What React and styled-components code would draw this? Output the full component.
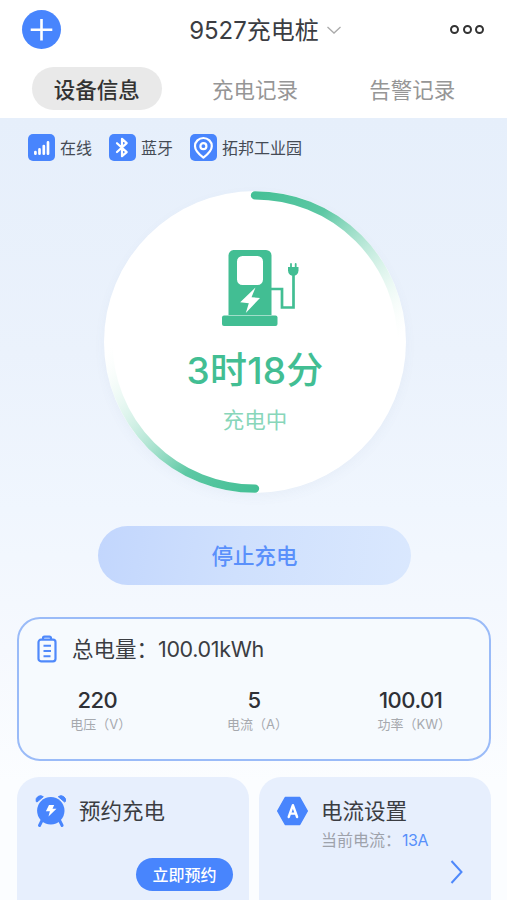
import React from 'react';
import styled, { createGlobalStyle } from 'styled-components';

const GlobalStyle = createGlobalStyle`
  * {
    box-sizing: border-box;
  }

  body {
    margin: 0;
    overflow: hidden;
    font-family: Inter, 'Noto Sans CJK SC', sans-serif;
    color: #3b3d42;
    background: #fff;
  }
`;

const Page = styled.div`
  width: 507px;
  height: 900px;
  overflow: hidden;
  display: flex;
  flex-direction: column;
`;

const Header = styled.header`
  flex: none;
  height: 59px;
  padding: 0 23px 0 22px;
  display: grid;
  grid-template-columns: 60px 1fr 60px;
  align-items: center;
`;

const AddButton = styled.button`
  width: 39px;
  height: 39px;
  padding: 0;
  border: 0;
  border-radius: 50%;
  background: #4885fd;
  display: flex;
  align-items: center;
  justify-content: center;
`;

const DeviceName = styled.div`
  display: flex;
  align-items: center;
  justify-content: center;
  gap: 7px;
  padding: 2px 0 0 25px;
  font-size: 24px;
  line-height: 34px;
  white-space: nowrap;
`;

const MoreButton = styled.div`
  justify-self: end;
  display: flex;
  gap: 3.5px;
`;

const Dot = styled.span`
  width: 9px;
  height: 9px;
  border: 2.4px solid #333;
  border-radius: 50%;
`;

const Tabs = styled.nav`
  flex: none;
  height: 59px;
  padding: 8px 17px 0 18px;
  display: grid;
  grid-template-columns: repeat(3, 1fr);
  justify-items: center;
`;

const Tab = styled.div`
  width: 130px;
  height: 43px;
  padding-left: ${(props) => (props.$active ? 0 : 2)}px;
  border-radius: 22px;
  text-align: center;
  font-size: 21.5px;
  line-height: 46px;
  font-weight: ${(props) => (props.$active ? 500 : 400)};
  color: ${(props) => (props.$active ? '#333' : '#969696')};
  background: ${(props) => (props.$active ? '#e9e9e9' : 'transparent')};
`;

const Content = styled.main`
  flex: 1;
  min-height: 0;
  display: flex;
  flex-direction: column;
  background: linear-gradient(
    #e6effb 0%,
    #ebf2fc 30%,
    #f0f6fe 50%,
    #f6f9fe 68%,
    #fbfdff 85%
  );
`;

const StatusRow = styled.div`
  display: flex;
  gap: 16px;
  padding: 16px 28px 0;
`;

const Status = styled.div`
  display: flex;
  align-items: center;
  gap: 6px;
  height: 27px;
  font-size: 16px;
  color: #454b55;
`;

const StatusText = styled.span`
  margin: -1px 1px 0 -1px;
`;

const StatusIcon = styled.span`
  width: 27px;
  height: 27px;
  border-radius: 5px;
  background: #4885fd;
  display: flex;
`;

const Dial = styled.section`
  flex: none;
  align-self: center;
  width: 302px;
  height: 302px;
  margin: 30px 0 0 3px;
  border-radius: 50%;
  background: #fff;
  box-shadow: 0 4px 12px rgba(90, 110, 150, 0.05);
  display: grid;

  > * {
    grid-area: 1 / 1;
  }
`;

const DialBody = styled.div`
  display: flex;
  flex-direction: column;
  align-items: center;
  padding-top: 57px;
`;

const TimeLeft = styled.div`
  margin-top: 16px;
  font-size: 37px;
  line-height: 54px;
  font-weight: 500;
  letter-spacing: 0.2px;
  color: #42be93;
`;

const DialState = styled.div`
  margin-top: 6px;
  font-size: 21.5px;
  line-height: 32px;
  color: #88d6ba;
`;

const StopButton = styled.button`
  flex: none;
  align-self: center;
  width: 313px;
  height: 59px;
  margin: 33px 0 0 2px;
  padding: 0 0 2px;
  border: 0;
  border-radius: 30px;
  font: 500 21.5px Inter, 'Noto Sans CJK SC', sans-serif;
  color: #5a90fb;
  background: linear-gradient(100deg, #c2d6fd, #cfe0fd 45%, #dae8fe);
`;

const EnergyCard = styled.section`
  flex: none;
  height: 144px;
  margin: 32px 16px 0 17px;
  border: 2px solid #9abbf8;
  border-radius: 23px;
  background: #f6fafe;
`;

const EnergyTotal = styled.div`
  display: flex;
  align-items: center;
  gap: 15px;
  height: 32px;
  margin: 14px 0 0 18px;
  font-size: 21.5px;
`;

const EnergyText = styled.div`
  margin-top: -4px;
`;

const EnergyValue = styled.span`
  letter-spacing: -0.35px;
`;

const Readings = styled.div`
  display: grid;
  grid-template-columns: repeat(3, 1fr);
  margin-top: 21px;
`;

const Reading = styled.div`
  text-align: center;
`;

const ReadingValue = styled.div`
  font-size: 22px;
  line-height: 28px;
  font-weight: 500;
  letter-spacing: -0.5px;
  color: #2f3136;
`;

const ReadingLabel = styled.div`
  padding-left: 7px;
  font-size: 13px;
  line-height: 20px;
  color: #a6a9ae;
`;

const Cards = styled.div`
  flex: none;
  display: grid;
  grid-template-columns: 232px 232px;
  gap: 10px;
  margin: 16px 0 0 17px;
`;

const Card = styled.section`
  height: 150px;
  padding: 17px 16px 0 18px;
  border-radius: 22px;
  background: #e7effd;
  display: flex;
  flex-direction: column;
`;

const CardHead = styled.div`
  display: flex;
  gap: 12px;
`;

const CardTitle = styled.div`
  font-size: 21.5px;
  line-height: 34px;
`;

const CardNote = styled.div`
  font-size: 16px;
  line-height: 24px;
  color: #9ea2ab;

  span {
    margin-left: 1px;
    letter-spacing: -0.5px;
    color: #5790fb;
  }
`;

const BookButton = styled.button`
  align-self: flex-end;
  width: 97px;
  height: 33px;
  margin-top: 30px;
  padding: 0 0 2px;
  border: 0;
  border-radius: 17px;
  font: 500 16px Inter, 'Noto Sans CJK SC', sans-serif;
  color: #fff;
  background: #4885fd;
`;

const NextArrow = styled.svg`
  align-self: flex-end;
  margin: 7px 11px 0 0;
`;

const PlusIcon = () => (
  <svg width="39" height="39" fill="none" stroke="#fff" strokeWidth="2.6">
    <path d="M19.5 9v21.5M8.7 19.7h21.6" />
  </svg>
);

const SignalIcon = () => (
  <svg width="27" height="27" stroke="#fff" strokeWidth="2.7" strokeLinecap="round">
    <path d="M7.4 19.7v-1.700M11.500 19.700v-4.300M15.800 19.700v-7.700M20 19.700V8.400" />
  </svg>
);

const BluetoothIcon = () => (
  <svg width="27" height="27" fill="none" stroke="#fff" strokeWidth="2.2" strokeLinejoin="round" strokeLinecap="round">
    <path d="M8 9.200l9.700 8.900-4.700 4.100V4.800l4.700 4.300L8 18" />
  </svg>
);

const PinIcon = () => (
  <svg width="27" height="27" fill="none" stroke="#fff" strokeWidth="2.2">
    <path d="M13.400 23.600C8.400 19.800 5 16.600 5 12.200a8.400 8.200 0 0 1 16.800 0C21.800 16.600 18.400 19.800 13.400 23.600z" strokeLinejoin="round" />
    <circle cx="13.400" cy="12.200" r="3" />
  </svg>
);

// Two arcs that start solid at the top and the bottom and fade out clockwise
const DialRing = () => (
  <svg width="302" height="302" fill="none" strokeWidth="8.4" strokeLinecap="round">
    <defs>
      <linearGradient id="ringTop" gradientUnits="userSpaceOnUse" x1="151" y1="4" x2="298" y2="144">
        <stop offset="0" stopColor="#45c096" />
        <stop offset="0.3" stopColor="#5dc8a4" />
        <stop offset="1" stopColor="#e8f9f2" stopOpacity="0" />
      </linearGradient>
      <linearGradient id="ringBottom" gradientUnits="userSpaceOnUse" x1="151" y1="298" x2="4" y2="158">
        <stop offset="0" stopColor="#45c096" />
        <stop offset="0.3" stopColor="#5dc8a4" />
        <stop offset="1" stopColor="#e8f9f2" stopOpacity="0" />
      </linearGradient>
    </defs>
    <path d="M151 4.400A146.600 146.600 0 0 1 297.600 151" stroke="url(#ringTop)" />
    <path d="M151 297.600A146.600 146.600 0 0 1 4.400 151" stroke="url(#ringBottom)" />
  </svg>
);

const ChargerIcon = () => (
  <svg width="94" height="80" viewBox="-14 0 94 80">
    <path
      fill="#42be93"
      fillRule="evenodd"
      d="M11.5 2H44a5.5 5.5 0 0 1 5.5 5.500V67h-43V7.500A5.500 5.500 0 0 1 11.500 2zM20.500 8a5.500 5.500 0 0 0-5.500 5.500v18a5.500 5.500 0 0 0 5.500 5.500h15a5.500 5.500 0 0 0 5.500-5.500v-18a5.500 5.500 0 0 0-5.500-5.500z"
    />
    <rect x="0" y="67.500" width="55.500" height="10.500" rx="2" fill="#42be93" />
    <path d="M33.500 39.500L18.200 54.300l8.600 1-3 9.700L38 50l-8.500-.8z" fill="#fff" />
    <path d="M49 41h11v18.500h11.500V24" fill="none" stroke="#42be93" strokeWidth="2.700" />
    <path d="M66 19h10.500v3.500a5.200 5.200 0 0 1-10.500 0z" fill="#42be93" />
    <path d="M69 20v-4M73.700 20v-4" stroke="#42be93" strokeWidth="1.800" strokeLinecap="round" />
  </svg>
);

const BatteryIcon = () => (
  <svg width="20" height="28" fill="none" stroke="#4f89fb" strokeWidth="2.200">
    <rect x="1.500" y="4.700" width="17" height="21.600" rx="2.500" />
    <path d="M6 4.500V3.200a1.500 1.500 0 0 1 1.500-1.500h5A1.500 1.500 0 0 1 14 3.200v1.300" />
    <path d="M6.500 10.800h7.500M6.500 16H14M6.500 21.300h7" strokeWidth="1.900" />
  </svg>
);

const AlarmIcon = () => (
  <svg width="32" height="34" viewBox="0 0 32 34">
    <circle cx="15.800" cy="16.800" r="13.700" fill="#4885fd" />
    <path
      d="M1.200 7.500A4.500 4.500 0 0 1 8.300 2.700L2 8zM30.400 7.500a4.500 4.500 0 0 0-7.100-4.800L29.600 8z"
      fill="#4885fd"
      stroke="#4885fd"
      strokeLinejoin="round"
    />
    <path d="M7 26.500l-2.500 5M24.600 26.500l2.500 5" stroke="#4885fd" strokeWidth="3" strokeLinecap="round" />
    <path d="M14 11h5.200l-1.700 3.800h4L13.500 22.500l1.400-5.300h-4z" fill="#fff" />
  </svg>
);

const HexagonIcon = () => (
  <svg width="32" height="34" viewBox="0 0 32 34">
    <path
      d="M8.300 3.500h14.400L30.300 17l-7.600 13.500H8.300L.700 17z"
      fill="#4885fd"
      stroke="#4885fd"
      strokeWidth="1.500"
      strokeLinejoin="round"
    />
    <path
      d="M11.700 23L15.900 11.200 20.100 23M13.200 19.600h5.400"
      fill="none"
      stroke="#fff"
      strokeWidth="2.400"
      strokeLinejoin="round"
      strokeLinecap="round"
    />
  </svg>
);

const readings = [
  { value: '220', label: '电压（V）' },
  { value: '5', label: '电流（A）' },
  { value: '100.01', label: '功率（KW）' },
];

const App = () => (
  <>
    <GlobalStyle />
    <Page>
      <Header>
        <AddButton>
          <PlusIcon />
        </AddButton>
        <DeviceName>
          9527充电桩
          <svg width="16" height="10" fill="none" stroke="#aaa" strokeWidth="1.3">
            <path d="M1.500 1l6.500 6 6.500-6" />
          </svg>
        </DeviceName>
        <MoreButton>
          <Dot />
          <Dot />
          <Dot />
        </MoreButton>
      </Header>

      <Tabs>
        <Tab $active>设备信息</Tab>
        <Tab>充电记录</Tab>
        <Tab>告警记录</Tab>
      </Tabs>

      <Content>
        <StatusRow>
          <Status>
            <StatusIcon>
              <SignalIcon />
            </StatusIcon>
            <StatusText>在线</StatusText>
          </Status>
          <Status>
            <StatusIcon>
              <BluetoothIcon />
            </StatusIcon>
            <StatusText>蓝牙</StatusText>
          </Status>
          <Status>
            <StatusIcon>
              <PinIcon />
            </StatusIcon>
            <StatusText>拓邦工业园</StatusText>
          </Status>
        </StatusRow>

        <Dial>
          <DialRing />
          <DialBody>
            <ChargerIcon />
            <TimeLeft>3时18分</TimeLeft>
            <DialState>充电中</DialState>
          </DialBody>
        </Dial>

        <StopButton>停止充电</StopButton>

        <EnergyCard>
          <EnergyTotal>
            <BatteryIcon />
            <EnergyText>
              总电量：<EnergyValue>100.01kWh</EnergyValue>
            </EnergyText>
          </EnergyTotal>
          <Readings>
            {readings.map(({ value, label }) => (
              <Reading key={label}>
                <ReadingValue>{value}</ReadingValue>
                <ReadingLabel>{label}</ReadingLabel>
              </Reading>
            ))}
          </Readings>
        </EnergyCard>

        <Cards>
          <Card>
            <CardHead>
              <AlarmIcon />
              <CardTitle>预约充电</CardTitle>
            </CardHead>
            <BookButton>立即预约</BookButton>
          </Card>
          <Card>
            <CardHead>
              <HexagonIcon />
              <div>
                <CardTitle>电流设置</CardTitle>
                <CardNote>
                  当前电流：<span>13A</span>
                </CardNote>
              </div>
            </CardHead>
            <NextArrow width="15" height="26" fill="none" stroke="#4f89fb" strokeWidth="2">
              <path d="M2.500 2l10 11-10 11" />
            </NextArrow>
          </Card>
        </Cards>
      </Content>
    </Page>
  </>
);

export default App;
